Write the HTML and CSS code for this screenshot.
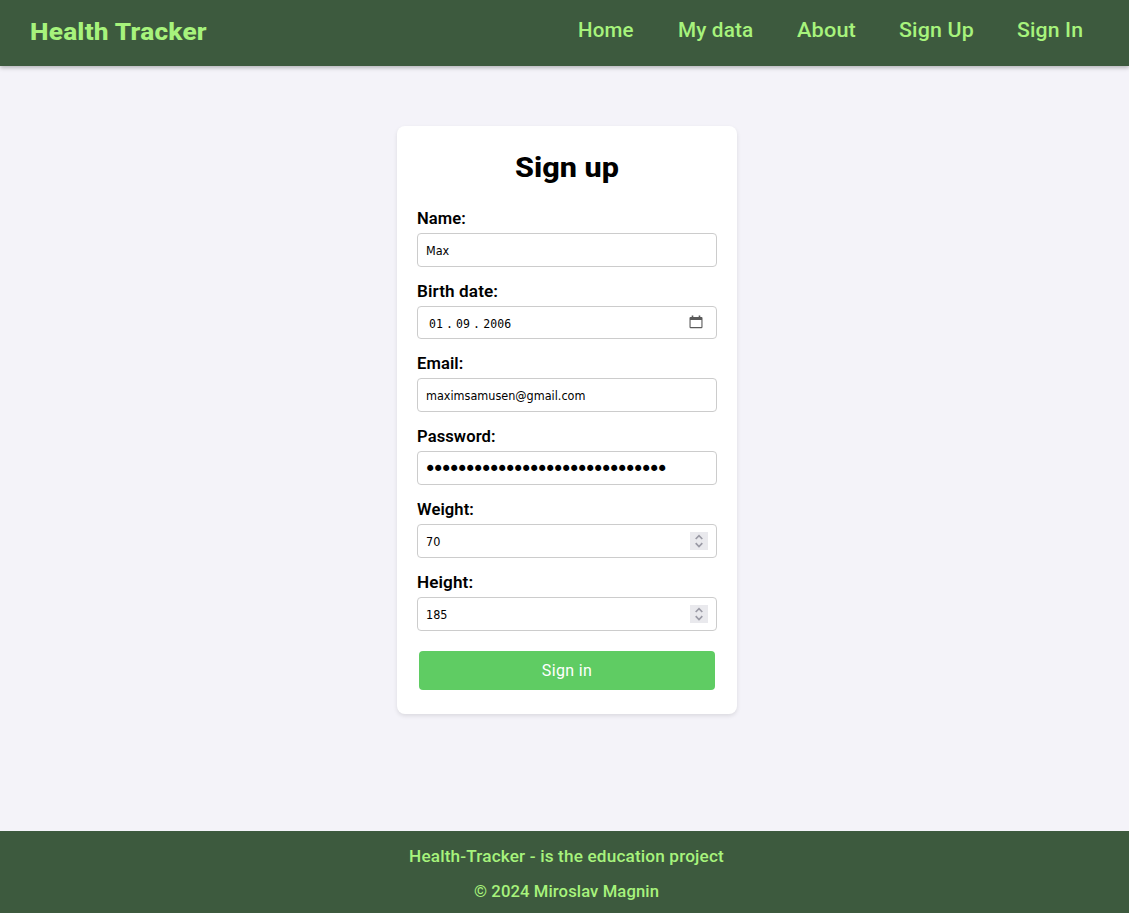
FILE: index.html
```html
<!DOCTYPE html>
<html lang="en">
<head>
<meta charset="utf-8">
<title>Health Tracker</title>
<link rel="stylesheet" href="styles.css">
</head>
<body>
<header class="header">
  <div class="brand">Health Tracker</div>
  <nav class="nav">
    <a class="nav-home">Home</a><a class="nav-data">My data</a><a class="nav-about">About</a><a class="nav-up">Sign Up</a><a class="nav-in">Sign In</a>
  </nav>
</header>
<main class="main">
  <form class="card">
    <h1 class="title"><span>Sign up</span></h1>
    <label class="label">Name:</label>
    <div class="field"><span class="value">Max</span></div>
    <label class="label label-wide">Birth date:</label>
    <div class="field field-date"><span class="value date">01<i>.</i>09<i>.</i>2006</span>
      <svg class="calendar" width="14" height="14" viewBox="0 0 14 14"><path d="M1.5 2h11a1 1 0 0 1 1 1v9a1.2 1.2 0 0 1-1.2 1.2H1.7A1.2 1.2 0 0 1 .5 12V3a1 1 0 0 1 1-1zM1.6 5v7h10.8V5z" fill="#5b5b5b" fill-rule="evenodd"/><path d="M3.5.4V3M10.5.4V3" stroke="#5b5b5b" stroke-width="1.6"/></svg>
    </div>
    <label class="label">Email:</label>
    <div class="field"><span class="value email">maximsamusen@gmail.com</span></div>
    <label class="label">Password:</label>
    <div class="field"><span class="value dots">••••••••••••••••••••••••••••••</span></div>
    <label class="label">Weight:</label>
    <div class="field"><span class="value">70</span>
      <svg class="spinner" width="18" height="18" viewBox="0 0 18 18"><path d="M5.7 7L9 3.7 12.3 7M5.7 11.2L9 14.5l3.3-3.3" fill="none" stroke="#9a9aa5" stroke-width="1.7"/></svg>
    </div>
    <label class="label label-wide">Height:</label>
    <div class="field"><span class="value">185</span>
      <svg class="spinner" width="18" height="18" viewBox="0 0 18 18"><path d="M5.7 7L9 3.7 12.3 7M5.7 11.2L9 14.5l3.3-3.3" fill="none" stroke="#9a9aa5" stroke-width="1.7"/></svg>
    </div>
    <button class="submit" type="button">Sign in</button>
  </form>
</main>
<footer class="footer">
  <p class="about-line">Health-Tracker - is the education project</p>
  <p class="copyright">© 2024 Miroslav Magnin</p>
</footer>
</body>
</html>
```
FILE: styles.css
```css
* { box-sizing: border-box; }
body {
  margin: 0;
  height: 913px;
  display: flex;
  flex-direction: column;
  background: #f4f3f9;
  font-family: Roboto, "Open Sans", sans-serif;
  font-weight: 500;
  color: #000;
}
.header {
  height: 66px;
  flex: none;
  display: flex;
  justify-content: space-between;
  padding: 0 46px 0 30px;
  background: #3d5a3e;
  color: #a7f37c;
  box-shadow: 0 2px 4px rgba(0, 0, 0, .25);
}
.brand {
  font-size: 24px;
  line-height: 64px;
  font-weight: 800;
  letter-spacing: .2px;
  white-space: nowrap;
  transform: scaleX(1.093);
  transform-origin: left;
}
.nav {
  display: grid;
  grid-template-columns: 56px 75px 58px 74px 66px;
  column-gap: 44px;
  font-size: 20px;
  line-height: 61px;
  letter-spacing: .15px;
  white-space: nowrap;
}
.nav a { transform-origin: left; }
.nav-home { transform: scaleX(1.025); }
.nav-data { transform: scaleX(1.035); }
.nav-about { transform: scaleX(1.085); }
.nav-up { transform: scaleX(1.07); }
.nav-in { transform: scaleX(1.06); }
.main { flex: 1; padding: 60px 0 0 397px; }
.card {
  width: 340px;
  height: 588px;
  padding: 25px 20px 24px;
  background: #fff;
  border-radius: 8px;
  box-shadow: 0 2px 4px rgba(0, 0, 0, .1);
}
.title {
  margin: 0 0 25px;
  font-size: 28px;
  line-height: 33px;
  font-weight: 800;
  text-align: center;
  letter-spacing: 0;
  transform: scaleX(1.09);
}
.label {
  display: block;
  font-size: 16px;
  line-height: 19px;
  margin-bottom: 5px;
  font-weight: 600;
  letter-spacing: .1px;
  transform: scaleX(1.035);
  transform-origin: left;
}
.label-wide { transform: scaleX(1.07); }
.field {
  height: 34px;
  margin-bottom: 15px;
  padding: 0 8px;
  display: flex;
  align-items: center;
  justify-content: space-between;
  border: 1px solid #ccc;
  border-radius: 4px;
  font: 400 12.5px "DejaVu Sans Condensed", "DejaVu Sans", sans-serif;
}
.field-date { height: 33px; padding: 0 13px 0 11px; }
.date { font: 11.5px "DejaVu Sans Mono", monospace; letter-spacing: .1px; padding-top: 2px; }
.date i { font-style: normal; display: inline-block; width: 13px; text-align: center; }
.calendar { margin-bottom: 1px; }
.dots { font: 21px "DejaVu Sans", sans-serif; letter-spacing: -4.39px; margin-left: -2px; padding-top: 1px; white-space: nowrap; }
.spinner { background: #e9e9ed; }
.submit {
  display: block;
  width: 296px;
  height: 39px;
  margin: 20px auto 0;
  padding: 0;
  border: 0;
  border-radius: 4px;
  background: #5fcc63;
  color: #fff;
  font: 400 16px Roboto, sans-serif;
  letter-spacing: .35px;
}
.footer {
  height: 82px;
  flex: none;
  padding: 16px 0 0 4px;
  background: #3d5a3e;
  color: #a7f37c;
  text-align: center;
  font-size: 16px;
  line-height: 19px;
}
.footer p { margin: 0 0 16px; }
.about-line { letter-spacing: .15px; transform: scaleX(1.073); }
.copyright { letter-spacing: .1px; transform: scaleX(1.04); }
```
